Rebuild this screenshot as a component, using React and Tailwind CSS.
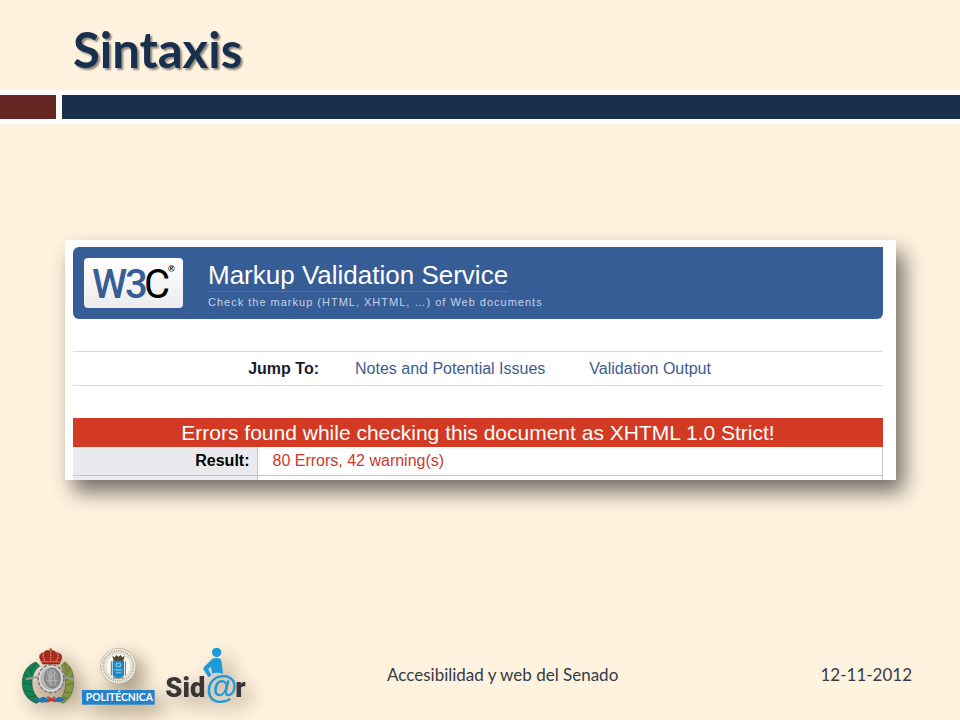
import clsx from 'clsx';

const jumpLinks = [
    { label: 'Notes and Potential Issues', href: '#notes' },
    { label: 'Validation Output', href: '#output' },
];

function SlideHeader({ title }) {
    return (
        <header>
            <h1 className="h-[90px] pl-[73px] pt-[19px] font-['Lato',sans-serif] text-[49px] leading-[60px] font-bold text-[#182f4d] [text-shadow:2px_2px_2px_rgba(0,0,0,0.45)]">
                {title}
            </h1>
            <div className="flex gap-[6px] border-y-[5px] border-white bg-white">
                <div className="h-6 w-14 bg-[#652523]" />
                <div className="h-6 flex-1 bg-[#1a2f4b]" />
            </div>
        </header>
    );
}

function W3CLogo() {
    return (
        <svg className="h-[50px] w-[99px] shrink-0 rounded-[4px] bg-linear-to-b from-white to-[#ececee]" viewBox="0 0 99 50" role="img" aria-label="W3C">
            <text y="40" fontFamily="Roboto, sans-serif" fontSize="40" fill="#375d96">
                <tspan x="8" fontWeight="500">W</tspan>
                <tspan x="41" fontWeight="500">3</tspan>
                <tspan x="60" fill="#000">C</tspan>
            </text>
            <text x="84" y="14" fontFamily="'Liberation Sans', sans-serif" fontSize="9" fontWeight="bold" fill="#000">®</text>
        </svg>
    );
}

function ValidatorBanner() {
    return (
        <div className="flex h-[72px] gap-[25px] rounded-l-[6px] rounded-br-[6px] bg-[#375d96] pl-[11px] pt-[11px]">
            <W3CLogo />
            <div>
                <h2 className="w-fit border-b border-[#4b72ab] pt-[2px] text-[26px] leading-[31px] text-white">
                    Markup Validation Service
                </h2>
                <p className="pt-[2px] text-[11px] leading-4 tracking-[1px] text-[#c3d3ee]">
                    Check the markup (HTML, XHTML, …) of Web documents
                </p>
            </div>
        </div>
    );
}

function JumpBar() {
    return (
        <nav className="mt-8 flex h-[35px] items-center border-y border-[#d6d8da] text-[16px]">
            <span className="w-[246px] text-right font-bold text-[#1c1c28]">Jump To:</span>
            {jumpLinks.map((link, i) => (
                <a key={link.href} href={link.href} className={clsx('text-[#3b5c91]', i === 0 ? 'ml-9' : 'ml-11')}>
                    {link.label}
                </a>
            ))}
        </nav>
    );
}

function ResultTable() {
    return (
        <table className="w-full border-collapse text-[16px]">
            <tbody>
                <tr className="h-7 border-b border-[#c3c5c8]">
                    <th scope="row" className="w-[184px] border-r border-[#c3c5c8] bg-[#e9eaed] pr-[7px] text-right font-bold text-black">
                        Result:
                    </th>
                    <td className="border-r border-[#c3c5c8] pl-[15px] text-[#c83a2c]">80 Errors, 42 warning(s)</td>
                </tr>
                <tr className="h-[5px]">
                    <th className="border-r border-[#c3c5c8] bg-[#e9eaed]" />
                    <td className="border-r border-[#c3c5c8]" />
                </tr>
            </tbody>
        </table>
    );
}

function ValidatorCard() {
    return (
        <section className="bg-white pt-[7px] pr-[13px] pl-2 font-['Liberation_Sans',Arial,sans-serif] shadow-[8px_12px_20px_0px_rgba(0,0,0,0.55)]">
            <ValidatorBanner />
            <JumpBar />
            <h3 className="mt-8 h-[29px] bg-[#d33a23] text-center text-[21px] leading-[29px] text-white">
                Errors found while checking this document as XHTML 1.0 Strict!
            </h3>
            <ResultTable />
        </section>
    );
}

function UniversityLogos() {
    return (
        <svg className="h-20 w-[145px]" viewBox="0 0 435 240" role="img" aria-label="Universidad Politécnica">
            {/* Laurel branches */}
            <g stroke="#14532d" strokeWidth="2">
                <path d="M78 66C55 74 38 96 37 126c-1 30 14 54 42 64l14-8c-20-16-28-34-27-56 1-22 9-38 23-48z" fill="#168257" />
                <path d="M78 68l-16 26M56 82l8 24M44 102l20 22M38 126l27 10M42 152l28 4M54 172l26-4" fill="none" />
            </g>
            <g stroke="#53652a" strokeWidth="2">
                <path d="M164 66c18 10 26 30 27 58 0 30-10 54-32 66l-14-8c18-16 22-34 22-56 0-22-6-36-14-48z" fill="#839447" />
                <path d="M164 68l6 26M180 84l-12 22M188 106l-20 16M190 130l-22 6M184 156l-20 2M172 176l-16-8" fill="none" />
            </g>
            {/* Gear and medallion */}
            <path d="M48 117l36-6M160 111l32 8" stroke="#989aa4" strokeWidth="6" />
            <ellipse cx="123" cy="116" rx="36" ry="39" fill="#a5a5a8" stroke="#6e6e72" strokeWidth="9" strokeDasharray="9 5" />
            <ellipse cx="123" cy="116" rx="34" ry="37" fill="#b6b5b5" stroke="#d9d9db" strokeWidth="5" />
            <ellipse cx="127" cy="114" rx="23" ry="30" fill="#918f8e" stroke="#5d5c5c" strokeWidth="2" />
            <path d="M113 92l7 44M121 88l-2 30M131 88l5 48M138 96l-18 20M111 122h30M124 90v46" stroke="#c6c4be" strokeWidth="2" />
            {/* Crown */}
            <path d="M94 64C85 50 89 39 101 38c5-7 13-8 18-5 6-3 15-1 19 5 15-1 22 11 13 26l-3 8H98z" fill="#a92b20" stroke="#6e1f18" strokeWidth="2" />
            <path d="M101 39c-4 10 0 18 5 23M122 32v31M143 39c4 10 0 18-5 23M97 65h51" fill="none" stroke="#d8923e" strokeWidth="4" strokeDasharray="4 2" />
            <circle cx="122" cy="29" r="4" fill="#9b5427" />
            {/* Ribbons */}
            <path d="M74 180l26-10 24 10 24-10 20 8-20 9-24-3-28 4z" fill="#2176b5" />
            <path d="M112 171l25 14M135 171l-24 15" stroke="#bf3b2f" strokeWidth="6" />
            {/* Round seal */}
            <circle cx="325" cy="78" r="53" fill="#f4f1e5" stroke="#aaa58f" strokeWidth="2" />
            <circle cx="325" cy="78" r="45" fill="none" stroke="#b8b39f" strokeWidth="7" strokeDasharray="4 3" />
            <circle cx="325" cy="78" r="38" fill="#fbfaf2" stroke="#8b8775" strokeWidth="1" />
            <path d="M307 47l7 5 5-7 6 5 7-5 5 7 7-5-4 16h-29z" fill="#5d4531" />
            <path d="M308 62h34v42c0 6-7 8-17 10-10-2-17-4-17-10z" fill="#1687c9" />
            <path d="M319 70h12v10h-12zM314 90h22M317 98h17" fill="none" stroke="#80b9d8" strokeWidth="4" />
            <path d="M304 64v42M346 64v42M309 114h32" stroke="#816640" strokeWidth="3" />
            <rect x="216" y="150" width="218" height="44" fill="#2581c8" />
            <text x="328" y="183" textAnchor="middle" fill="#fff" fontFamily="Lato, sans-serif" fontWeight="bold" fontSize="31">
                POLITÉCNICA
            </text>
        </svg>
    );
}

function SidarLogo() {
    return (
        <svg className="h-20 w-[115px]" viewBox="15 0 345 240" role="img" aria-label="Sidar">
            <g fontFamily="Roboto, sans-serif" fontWeight="900" fontSize="82" fill="#373536">
                <text x="46" y="171">Sid</text>
                <text x="256" y="171">r</text>
            </g>
            <text x="167" y="175" fontFamily="'Liberation Sans', sans-serif" fontWeight="bold" fontSize="98" fill="#1c9ad9">@</text>
            <circle cx="200" cy="37" r="14" fill="#1c9ad9" />
            {/* Seated torso with the arm bent back */}
            <path d="M187 56c8-4 24-3 27 5l5 40c-12-5-24-3-32 0l-5-20-7 6 9 19-8 6-15-22c-2-4-1-7 2-10z" fill="#1c9ad9" />
        </svg>
    );
}

function SlideFooter() {
    return (
        <footer className="flex h-20 items-start justify-between pr-12 pl-[10px] font-['Lato',sans-serif] text-[17px] leading-6 text-[#343b45]">
            <div className="flex [filter:drop-shadow(8px_8px_10px_rgba(70,50,20,0.5))]">
                <UniversityLogos />
                <SidarLogo />
            </div>
            <div className="mt-[23px] flex w-[525px] justify-between">
                <p>Accesibilidad y web del Senado</p>
                <time dateTime="2012-11-12">12-11-2012</time>
            </div>
        </footer>
    );
}

export default function App() {
    return (
        <div className="flex min-h-screen flex-col bg-[#fff3e0]">
            <SlideHeader title="Sintaxis" />
            <main className="flex-1 pt-[116px] pr-16 pl-[65px]">
                <ValidatorCard />
            </main>
            <SlideFooter />
        </div>
    );
}
